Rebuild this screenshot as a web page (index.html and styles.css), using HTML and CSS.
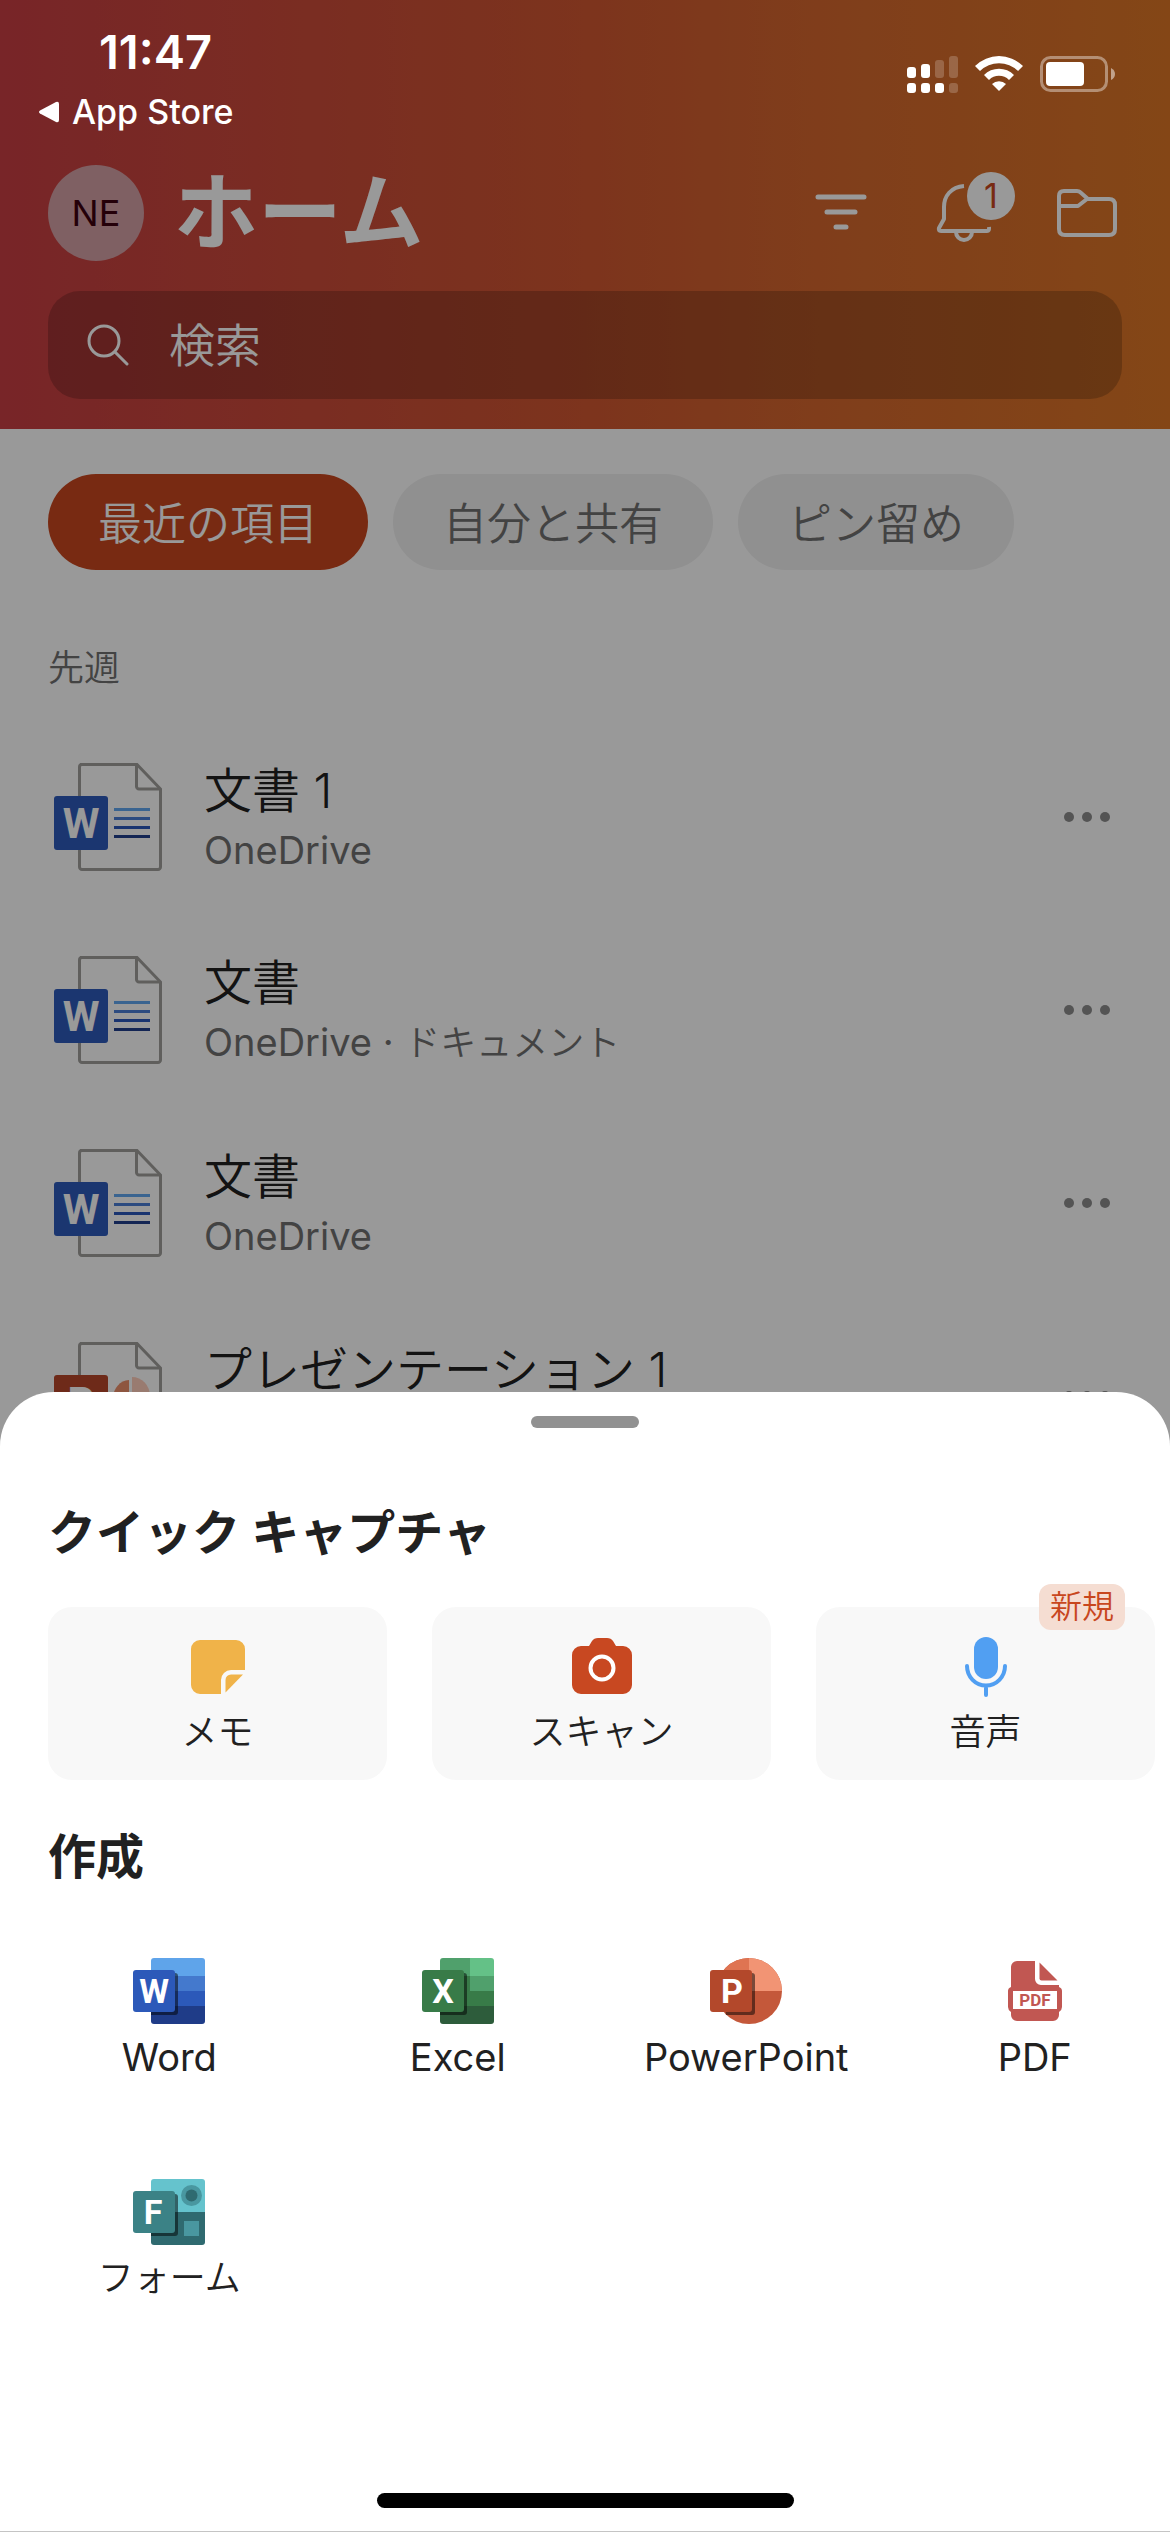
FILE: index.html
```html
<!DOCTYPE html>
<html lang="ja">
<head>
    <meta charset="UTF-8">
    <meta name="viewport" content="width=device-width, initial-scale=1.0">
    <title>ホーム</title>
    <link rel="stylesheet" href="styles.css">
</head>
<body>
    <!-- shared file icons -->
    <svg class="defs" aria-hidden="true">
        <symbol id="page" viewBox="0 0 108 108">
            <path d="M26 1.500h57L106.500 26v78a2.500 2.500 0 0 1-2.500 2.500H28a2.500 2.500 0 0 1-2.500-2.500V4A2.500 2.500 0 0 1 28 1.500z" fill="#fff" stroke="#a09f9c" stroke-width="3"/>
            <path d="M82.500 2v21.500a2.500 2.500 0 0 0 2.500 2.500h21" fill="none" stroke="#a09f9c" stroke-width="3"/>
        </symbol>
        <symbol id="word-file" viewBox="0 0 108 108">
            <use href="#page"/>
            <path d="M60 46.500h36" stroke="#61a7f0" stroke-width="3"/>
            <path d="M60 55.500h36" stroke="#4a7dd6" stroke-width="3"/>
            <path d="M60 64.500h36" stroke="#2b57bb" stroke-width="3"/>
            <path d="M60 73.500h36" stroke="#203f8c" stroke-width="3"/>
            <rect y="33" width="54" height="54" rx="3" fill="#2d5abb"/>
        </symbol>
        <symbol id="ppt-file" viewBox="0 0 108 108">
            <use href="#page"/>
            <path d="M75 56V38a17 18 0 0 0-16 18z" fill="#ed8f6c"/>
            <path d="M78 54V35a18 19 0 0 1 18 19z" fill="#ffcdbb"/>
            <rect y="33" width="54" height="54" rx="3" fill="#b7472a"/>
        </symbol>
    </svg>

    <div class="status-bar">
        <div class="status-left">
            <div class="time">11:47</div>
            <a class="back-link" href="#">
                <svg width="22" height="22" viewBox="0 0 22 22"><path d="M2 9.500 18 1q3-1 3 2v16q0 3-3 2L2 12.500q-2-1.500 0-3z" fill="#fff"/></svg>
                <span>App Store</span>
            </a>
        </div>
        <svg class="status-icons" width="210" height="40" viewBox="0 0 210 40" fill="#fff">
            <rect x="0" y="12" width="9" height="11" rx="3"/>
            <rect x="14" y="9" width="9" height="14" rx="3"/>
            <rect x="28" y="5" width="9" height="18" rx="3" opacity=".2"/>
            <rect x="42" y="1" width="9" height="22" rx="3" opacity=".2"/>
            <rect x="0" y="28" width="9" height="10" rx="3"/>
            <rect x="14" y="28" width="9" height="10" rx="3"/>
            <rect x="28" y="28" width="9" height="10" rx="3"/>
            <rect x="42" y="28" width="9" height="10" rx="3" opacity=".2"/>
            <path d="M68 11a34 34 0 0 1 48 0l-5 5a27 27 0 0 0-38 0z"/>
            <path d="M77 20a21 21 0 0 1 30 0l-5 5a14 14 0 0 0-20 0z"/>
            <path d="M85 29a10 10 0 0 1 14 0l-7 7z"/>
            <rect x="134.500" y="2.500" width="65" height="33" rx="9" fill="none" stroke="#fff" stroke-width="3" opacity=".4"/>
            <rect x="139" y="7" width="38" height="24" rx="4"/>
            <path d="M204 13q4 2 4 6t-4 6z" opacity=".5"/>
        </svg>
    </div>

    <div class="app">
        <header class="header">
            <div class="title-row">
                <button class="avatar">NE</button>
                <h1 class="title">ホーム</h1>
                <div class="actions">
                    <button class="action" aria-label="フィルター">
                        <svg width="60" height="72" viewBox="0 0 60 72" fill="none" stroke="#fff" stroke-width="5" stroke-linecap="round"><path d="M9 20h46M18 35h28M27 50h10"/></svg>
                    </button>
                    <button class="action" aria-label="通知">
                        <svg width="60" height="72" viewBox="0 0 60 72" fill="none" stroke="#fff" stroke-width="4" stroke-linejoin="round"><path d="M31 9C18 10 11 19 11 30v12L6 51q-1 3 2 3h46q2.500 0 2-4M23 55a8 8 0 0 0 16 0"/></svg>
                        <span class="count">1</span>
                    </button>
                    <button class="action" aria-label="ファイル">
                        <svg width="60" height="72" viewBox="0 0 60 72" fill="none" stroke="#fff" stroke-width="4" stroke-linejoin="round"><path d="M2 19q0-5 5-5h13q2 0 3 1l8 7h21q6 0 6 6v24q0 6-6 6H8q-6 0-6-6zM2 29h19l9-7"/></svg>
                    </button>
                </div>
            </div>
            <label class="search">
                <svg width="42" height="42" viewBox="0 0 42 42" fill="none" stroke="#fff" stroke-width="3" stroke-linecap="round"><circle cx="17" cy="17" r="15"/><path d="M28 28l12 12"/></svg>
                <input type="search" placeholder="検索" aria-label="検索">
            </label>
        </header>

        <main>
            <nav class="filters">
                <button class="pill active">最近の項目</button>
                <button class="pill">自分と共有</button>
                <button class="pill">ピン留め</button>
            </nav>
            <h2 class="group">先週</h2>
            <ul class="files">
                <li class="file">
                    <svg class="file-icon" viewBox="0 0 108 108"><use href="#word-file"/><text x="27" y="75" class="file-letter">W</text></svg>
                    <div class="file-text">
                        <div class="file-name">文書 1</div>
                        <div class="file-place">OneDrive</div>
                    </div>
                    <button class="more" aria-label="その他"><i></i><i></i><i></i></button>
                </li>
                <li class="file">
                    <svg class="file-icon" viewBox="0 0 108 108"><use href="#word-file"/><text x="27" y="75" class="file-letter">W</text></svg>
                    <div class="file-text">
                        <div class="file-name">文書</div>
                        <div class="file-place">OneDrive · <span class="folder">ドキュメント</span></div>
                    </div>
                    <button class="more" aria-label="その他"><i></i><i></i><i></i></button>
                </li>
                <li class="file">
                    <svg class="file-icon" viewBox="0 0 108 108"><use href="#word-file"/><text x="27" y="75" class="file-letter">W</text></svg>
                    <div class="file-text">
                        <div class="file-name">文書</div>
                        <div class="file-place">OneDrive</div>
                    </div>
                    <button class="more" aria-label="その他"><i></i><i></i><i></i></button>
                </li>
                <li class="file">
                    <svg class="file-icon" viewBox="0 0 108 108"><use href="#ppt-file"/><text x="27" y="75" class="file-letter">P</text></svg>
                    <div class="file-text">
                        <div class="file-name">プレゼンテーション 1</div>
                    </div>
                    <button class="more" aria-label="その他"><i></i><i></i><i></i></button>
                </li>
            </ul>
        </main>
    </div>

    <div class="scrim"></div>

    <section class="sheet">
        <div class="handle"></div>
        <h2 class="sheet-title">クイック キャプチャ</h2>
        <div class="cards">
            <button class="card">
                <svg width="60" height="60" viewBox="0 0 60 60" fill="#f0b349"><path d="M12 3h36a9 9 0 0 1 9 9v21H43a10 10 0 0 0-10 10v14H12a9 9 0 0 1-9-9V12a9 9 0 0 1 9-9z"/><path d="M55 37.500 37.500 55.500V43a5.500 5.500 0 0 1 5.500-5.500z"/></svg>
                <span>メモ</span>
            </button>
            <button class="card">
                <svg width="60" height="60" viewBox="0 0 60 60"><path d="M9 9h8l3-5q2-3 6-3h9q4 0 6 3l3 5h7a9 9 0 0 1 9 9v30a9 9 0 0 1-9 9H9a9 9 0 0 1-9-9V18a9 9 0 0 1 9-9z" fill="#c84821"/><circle cx="30" cy="31" r="11.500" fill="none" stroke="#fff" stroke-width="4"/></svg>
                <span>スキャン</span>
            </button>
            <button class="card">
                <span class="badge">新規</span>
                <svg width="60" height="60" viewBox="0 0 60 60"><rect x="18" y="0" width="24" height="42" rx="12" fill="#519ff2"/><path d="M11 29a19 19.500 0 0 0 38 0M30 50v8" fill="none" stroke="#519ff2" stroke-width="4" stroke-linecap="round"/></svg>
                <span>音声</span>
            </button>
        </div>
        <h2 class="sheet-title">作成</h2>
        <div class="apps">
            <button class="app-item">
                <svg width="72" height="66" viewBox="0 0 72 66">
                    <path d="M18 18V3a3 3 0 0 1 3-3h48a3 3 0 0 1 3 3v15z" fill="#5fa4ea"/>
                    <path d="M18 18h54v15H18z" fill="#4479cd"/>
                    <path d="M18 33h54v15H18z" fill="#2c59b9"/>
                    <path d="M18 48h54v15a3 3 0 0 1-3 3H21a3 3 0 0 1-3-3z" fill="#1f3c88"/>
                    <path d="M18 15h24a3 3 0 0 1 3 3v36a3 3 0 0 1-3 3H18z" fill="#000" opacity=".5"/>
                    <rect y="12" width="42" height="42" rx="3" fill="#2c59b9"/>
                    <text x="21" y="45" class="app-letter">W</text>
                </svg>
                <span>Word</span>
            </button>
            <button class="app-item">
                <svg width="72" height="66" viewBox="0 0 72 66">
                    <path d="M18 18V3a3 3 0 0 1 3-3h27v18z" fill="#50a06c"/>
                    <path d="M48 0h21a3 3 0 0 1 3 3v15H48z" fill="#64c187"/>
                    <path d="M48 18h24v15H48z" fill="#50a06c"/>
                    <path d="M18 18h30v30H18zM48 33h24v15H48z" fill="#387b48"/>
                    <path d="M18 48h54v15a3 3 0 0 1-3 3H21a3 3 0 0 1-3-3z" fill="#2d5c3b"/>
                    <path d="M18 15h24a3 3 0 0 1 3 3v36a3 3 0 0 1-3 3H18z" fill="#000" opacity=".5"/>
                    <rect y="12" width="42" height="42" rx="3" fill="#387b48"/>
                    <text x="21" y="45" class="app-letter">X</text>
                </svg>
                <span>Excel</span>
            </button>
            <button class="app-item">
                <svg width="72" height="66" viewBox="0 0 72 66">
                    <circle cx="39" cy="33" r="33" fill="#c4583a"/>
                    <path d="M39 0v33H6A33 33 0 0 1 39 0z" fill="#df7452"/>
                    <path d="M39 0a33 33 0 0 1 33 33H39z" fill="#f29474"/>
                    <path d="M11 15h31a3 3 0 0 1 3 3v36a3 3 0 0 1-3 3H16z" fill="#000" opacity=".5"/>
                    <rect y="12" width="42" height="42" rx="3" fill="#b3482b"/>
                    <text x="22" y="45" class="app-letter">P</text>
                </svg>
                <span>PowerPoint</span>
            </button>
            <button class="app-item">
                <svg width="72" height="66" viewBox="0 0 72 66">
                    <path d="M18 3h18v18a6 6 0 0 0 6 6h18v2q3 1 3 4v16q0 3-3 5v3a6 6 0 0 1-6 6H18a6 6 0 0 1-6-6v-3q-3-2-3-5V33q0-3 3-4V9a6 6 0 0 1 6-6z" fill="#c15752"/>
                    <path d="M40.500 4.500v16a2 2 0 0 0 2 2h16z" fill="#c15752"/>
                    <path d="M14 33h44v18H14z" fill="#fff"/>
                    <text x="36" y="48" class="pdf-letters">PDF</text>
                </svg>
                <span>PDF</span>
            </button>
            <button class="app-item">
                <svg width="72" height="66" viewBox="0 0 72 66">
                    <path d="M18 33V3a3 3 0 0 1 3-3h48a3 3 0 0 1 3 3v30z" fill="#65c3cd"/>
                    <path d="M18 33h54v30a3 3 0 0 1-3 3H21a3 3 0 0 1-3-3z" fill="#2f6a70"/>
                    <circle cx="58.500" cy="16.500" r="10.500" fill="#4997a0"/>
                    <circle cx="58.500" cy="16.500" r="6" fill="#2f6a70"/>
                    <path d="M51 42h15v15H51z" fill="#4997a0"/>
                    <path d="M18 15h24a3 3 0 0 1 3 3v36a3 3 0 0 1-3 3H18z" fill="#000" opacity=".5"/>
                    <rect y="12" width="42" height="42" rx="3" fill="#3b8286"/>
                    <text x="20" y="45" class="app-letter">F</text>
                </svg>
                <span class="kana">フォーム</span>
            </button>
        </div>
        <div class="home-indicator"></div>
    </section>
</body>
</html>
```
FILE: styles.css
```css
* {
    box-sizing: border-box;
}

body {
    margin: 0;
    height: 100vh;
    overflow: hidden;
    background: #fff;
    color: #212121;
    font-family: Inter, "Noto Sans CJK JP", sans-serif;
}

h1, h2, ul {
    margin: 0;
    padding: 0;
}

button {
    padding: 0;
    border: none;
    background: none;
    color: inherit;
    font-family: inherit;
    cursor: pointer;
}

svg {
    flex-shrink: 0;
}

.defs {
    position: absolute;
    width: 0;
    height: 0;
}

/* status bar */
.status-bar {
    position: absolute;
    top: 0;
    left: 0;
    right: 0;
    z-index: 3;
    display: flex;
    justify-content: space-between;
    padding: 26px 53px 0 38px;
    color: #fff;
}

.time {
    padding-left: 61px;
    font-size: 47px;
    font-weight: 600;
    line-height: 52px;
}

.back-link {
    display: flex;
    align-items: center;
    gap: 12px;
    margin-top: 12px;
    color: #fff;
    font-size: 34px;
    font-weight: 500;
    line-height: 44px;
    text-decoration: none;
}

.status-icons {
    margin-top: 29px;
}

/* header */
.header {
    padding: 165px 48px 30px;
    background: linear-gradient(90deg, #c83e43, #cc4d38 30%, #d05731 50%, #d5672e 70%, #dc7626);
}

.title-row {
    display: flex;
    align-items: center;
    height: 96px;
}

.avatar {
    width: 96px;
    height: 96px;
    border-radius: 50%;
    background: #d4a0a5;
    color: #3d0010;
    font-size: 36px;
}

.title {
    margin-left: 30px;
    color: #fff;
    font-size: 84px;
    line-height: 96px;
}

.actions {
    display: flex;
    gap: 64px;
    margin-left: auto;
    margin-right: 5px;
}

.action {
    position: relative;
    height: 72px;
}

.count {
    position: absolute;
    top: -5px;
    left: 34px;
    width: 48px;
    height: 48px;
    border-radius: 50%;
    background: #fff;
    color: #c8471e;
    font-size: 34px;
    line-height: 48px;
}

.search {
    display: flex;
    align-items: center;
    gap: 40px;
    height: 108px;
    margin-top: 30px;
    padding: 0 39px;
    border-radius: 32px;
    background: rgba(0, 0, 0, 0.2);
}

.search input {
    flex: 1;
    min-width: 0;
    padding: 0;
    border: none;
    outline: none;
    background: none;
    color: #fff;
    font-family: inherit;
    font-size: 46px;
    font-weight: 350;
}

.search input::placeholder {
    color: #fff;
    opacity: 1;
}

/* file list */
.filters {
    display: flex;
    gap: 25px;
    padding: 45px 48px 0;
}

.pill {
    height: 96px;
    padding: 0 50px 3px;
    border-radius: 48px;
    background: #f0f0f0;
    color: #707070;
    font-size: 44px;
    font-weight: 350;
    white-space: nowrap;
}

.pill.active {
    background: #c8471e;
    color: #fff;
}

.group {
    padding: 74px 48px 28px;
    color: #707070;
    font-size: 36px;
    font-weight: 350;
    line-height: 48px;
}

.files {
    list-style: none;
}

.file {
    display: flex;
    align-items: center;
    height: 193px;
    padding: 0 60px 0 54px;
}

.file-icon {
    width: 108px;
    height: 108px;
}

.file-letter,
.app-letter,
.pdf-letters {
    fill: #fff;
    font-family: Roboto, sans-serif;
    font-weight: 700;
    text-anchor: middle;
}

.file-letter {
    font-size: 42px;
}

.file-text {
    flex: 1;
    min-height: 122px;
    margin-left: 42px;
    padding-top: 4px;
}

.file-name {
    font-size: 48px;
    font-weight: 350;
    line-height: 62px;
}

.file-place {
    color: #707070;
    font-size: 38px;
    line-height: 56px;
}

.folder {
    font-size: 36px;
    font-weight: 350;
}

.more {
    display: flex;
    gap: 8px;
}

.more i {
    width: 10px;
    height: 10px;
    border-radius: 50%;
    background: #8c8c8c;
}

.scrim {
    position: absolute;
    inset: 0;
    z-index: 1;
    background: rgba(0, 0, 0, 0.4);
}

/* bottom sheet */
.sheet {
    position: absolute;
    left: 0;
    right: 0;
    bottom: 0;
    z-index: 2;
    padding: 24px 0 23px;
    border-bottom: 1px solid #c4c4c4;
    border-radius: 54px 54px 0 0;
    background: #fff;
}

.handle {
    width: 108px;
    height: 12px;
    margin: 0 auto;
    border-radius: 6px;
    background: #919191;
}

.sheet-title {
    padding-left: 48px;
    font-size: 48px;
    line-height: 72px;
}

.handle + .sheet-title {
    margin-top: 69px;
}

.cards {
    display: grid;
    grid-template-columns: repeat(3, 1fr);
    gap: 45px;
    margin: 38px 0 41px;
    padding: 0 15px 0 48px;
}

.card {
    position: relative;
    display: flex;
    flex-direction: column;
    align-items: center;
    height: 173px;
    padding-top: 30px;
    border-radius: 24px;
    background: #f8f8f8;
    font-size: 36px;
    font-weight: 350;
    line-height: 70px;
}

.badge {
    position: absolute;
    top: -23px;
    right: 30px;
    padding: 0 11px;
    border-radius: 12px;
    background: #f5ddd2;
    color: #c8471e;
    font-size: 32px;
    line-height: 46px;
}

.apps {
    display: grid;
    grid-template-columns: repeat(4, 1fr);
    gap: 89px 48px;
    margin-top: 65px;
    padding: 0 15px 0 49px;
}

.app-item {
    display: flex;
    flex-direction: column;
    align-items: center;
    font-size: 38px;
    line-height: 66px;
}

.kana {
    font-size: 36px;
    font-weight: 350;
}

.app-letter {
    font-size: 34px;
}

.pdf-letters {
    fill: #c15752;
    font-size: 17px;
}

.home-indicator {
    width: 417px;
    height: 15px;
    margin: 182px auto 0;
    border-radius: 8px;
    background: #000;
}
```
